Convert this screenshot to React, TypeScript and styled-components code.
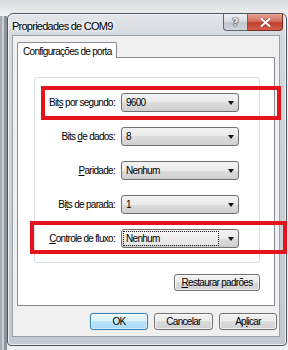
import React from 'react';
import styled, {createGlobalStyle, css} from 'styled-components';

const GlobalStyle = createGlobalStyle`
  html, body {
    margin: 0;
    padding: 0;
    background: #e6e7e9;
  }
  body {
    font-family: "Liberation Sans", Arial, sans-serif;
    font-size: 10px;
    letter-spacing: -0.7px;
    color: #000;
  }
`;

const Screen = styled.div`
  position: relative;
  width: 288px;
  height: 350px;
  box-sizing: border-box;
  padding: 13px 1px 0 7px;
  overflow: hidden;
  background:
    linear-gradient(90deg, #a7acb2 0 2px, #cdd1d5 2px 4px, #8d939a 4px 7px) 0 16px / 7px 100% no-repeat,
    linear-gradient(180deg, #d9dadc 0, #eceded 13px) 0 0 / 100% 13px no-repeat,
    #eeeff0;
`;

const Window = styled.div`
  width: 280px;
  height: 333px;
  box-sizing: border-box;
  border: 1px solid #4f555d;
  border-radius: 6px 6px 4px 4px;
  background: linear-gradient(180deg, #e3e6ea 0, #d3d8dd 24px, #c4c9cf 100%);
  box-shadow: inset 0 0 0 1px rgba(255, 255, 255, 0.65);
  display: flex;
  flex-direction: column;
  padding: 0 6px 8px 4px;
`;

const TitleBar = styled.div`
  height: 21px;
  display: flex;
  justify-content: space-between;
  align-items: flex-start;
  margin-right: -3px;
`;

const Title = styled.div`
  padding-top: 6px;
  font-size: 11px;
  letter-spacing: -0.75px;
  line-height: 12px;
  text-shadow: 0 0 4px #fff, 0 0 6px #fff;
`;

const Caption = styled.div`
  display: flex;
`;

const CaptionButton = styled.div<{$close?: boolean}>`
  height: 17px;
  box-sizing: border-box;
  display: flex;
  align-items: center;
  justify-content: center;
  border: 1px solid #5f6770;
  border-top: none;
  font-family: "DejaVu Sans", sans-serif;
  font-weight: bold;
  letter-spacing: 0;
  ${(p) =>
    p.$close
      ? css`
          width: 35px;
          border-radius: 0 0 4px 0;
          border-left: none;
          border-color: #7a2b22;
          background: linear-gradient(180deg, #e7a597 0, #d2705f 45%, #c0402c 55%, #d0604a 100%);
        `
      : css`
          width: 25px;
          border-radius: 0 0 0 4px;
          background: linear-gradient(180deg, #eef0f3 0, #d9dde2 45%, #c3c8cf 55%, #d2d6db 100%);
          color: #f4f4f4;
          font-size: 11px;
          text-shadow: 0 0 1px #222, 0 0 1px #222, 0 0 2px #444;
        `}
`;

const Client = styled.div`
  height: 302px;
  box-sizing: border-box;
  background: #f0f0f0;
  border: 1px solid #9aa0a7;
  padding: 6px 4px 0 4px;
  display: flex;
  flex-direction: column;
`;

const TabStrip = styled.div`
  display: flex;
  position: relative;
  z-index: 1;
  margin-bottom: -1px;
`;

const Tab = styled.div`
  width: 100px;
  height: 16px;
  box-sizing: border-box;
  background: #fff;
  border: 1px solid #898c95;
  border-bottom: none;
  border-radius: 2px 2px 0 0;
  padding: 3px 0 0 5px;
  line-height: 12px;
`;

const Panel = styled.div`
  height: 249px;
  box-sizing: border-box;
  background: #fff;
  border: 1px solid #898c95;
  padding: 19px 14px 0 16px;
  display: flex;
  flex-direction: column;
  align-items: flex-end;
`;

const GroupBox = styled.div`
  width: 226px;
  height: 186px;
  box-sizing: border-box;
  border: 1px solid #d5dfe5;
  border-radius: 3px;
  display: grid;
  grid-template-columns: 80px 118px;
  grid-auto-rows: 19px;
  column-gap: 6px;
  row-gap: 15px;
  padding-top: 15px;
  align-items: center;
  align-self: stretch;
`;

const Label = styled.div`
  text-align: right;
  white-space: nowrap;
`;

const Key = styled.span`
  text-decoration: underline;
`;

const Combo = styled.div`
  height: 19px;
  box-sizing: border-box;
  border: 1px solid #707070;
  border-radius: 3px;
  background: linear-gradient(180deg, #f2f2f2 0, #ebebeb 50%, #dddddd 50%, #cfcfcf 100%);
  display: flex;
  align-items: center;
  padding: 0 4px 0 2px;
`;

const ComboValue = styled.div<{$focused?: boolean}>`
  flex: 1;
  height: 13px;
  line-height: 13px;
  padding-left: 2px;
  box-sizing: border-box;
  margin-right: 10px;
  ${(p) =>
    p.$focused &&
    css`
      outline: 1px dotted #222;
      background: linear-gradient(180deg, #f6f6f6, #e4e4e4);
    `}
`;

const Arrow = styled.span`
  width: 0;
  height: 0;
  border-left: 3.5px solid transparent;
  border-right: 3.5px solid transparent;
  border-top: 4px solid #111;
`;

const Button = styled.div<{$width: number; $default?: boolean}>`
  width: ${(p) => p.$width}px;
  height: 17px;
  box-sizing: border-box;
  border: 1px solid #707070;
  border-radius: 3px;
  background: linear-gradient(180deg, #f2f2f2 0, #ebebeb 50%, #dddddd 50%, #cfcfcf 100%);
  box-shadow: inset 0 0 0 1px rgba(255, 255, 255, 0.7);
  display: flex;
  align-items: center;
  justify-content: center;
  line-height: 12px;
  ${(p) =>
    p.$default &&
    css`
      border-color: #3c7fb1;
      background: linear-gradient(180deg, #eaf6fd 0, #d9f0fc 50%, #bee6fd 50%, #a7d9f5 100%);
      box-shadow: inset 0 0 0 1px rgba(255, 255, 255, 0.5), 0 0 1px #6cc0ef;
    `}
`;

const RestoreRow = styled.div`
  margin-top: 11px;
`;

const ButtonRow = styled.div`
  margin-top: 7px;
  margin-right: -2px;
  display: flex;
  justify-content: flex-end;
  gap: 6px;
`;

const Highlight = styled.div<{$x: number; $y: number; $w: number; $h: number}>`
  position: absolute;
  left: ${(p) => p.$x}px;
  top: ${(p) => p.$y}px;
  width: ${(p) => p.$w}px;
  height: ${(p) => p.$h}px;
  box-sizing: border-box;
  border: 4px solid #e5131b;
  pointer-events: none;
`;

const CloseIcon = () => (
  <svg width="11" height="9" viewBox="0 0 11 9">
    <path d="M1.5 1 L9.5 8 M9.5 1 L1.5 8" stroke="#5b1208" strokeWidth="3.4" strokeLinecap="round" opacity="0.45" />
    <path d="M1.5 1 L9.5 8 M9.5 1 L1.5 8" stroke="#fff" strokeWidth="2.2" strokeLinecap="round" />
  </svg>
);

const rows: {label: React.ReactNode; value: string; focused?: boolean}[] = [
  {label: <>Bit<Key>s</Key> por segundo:</>, value: '9600'},
  {label: <>Bits <Key>d</Key>e dados:</>, value: '8'},
  {label: <><Key>P</Key>aridade:</>, value: 'Nenhum'},
  {label: <>Bi<Key>t</Key>s de parada:</>, value: '1'},
  {label: <><Key>C</Key>ontrole de fluxo:</>, value: 'Nenhum', focused: true},
];

export default function App() {
  return (
    <>
      <GlobalStyle />
      <Screen>
        <Window>
          <TitleBar>
            <Title>Propriedades de COM9</Title>
            <Caption>
              <CaptionButton>?</CaptionButton>
              <CaptionButton $close>
                <CloseIcon />
              </CaptionButton>
            </Caption>
          </TitleBar>
          <Client>
            <TabStrip>
              <Tab>Configurações de porta</Tab>
            </TabStrip>
            <Panel>
              <GroupBox>
                {rows.map((row, i) => (
                  <React.Fragment key={i}>
                    <Label>{row.label}</Label>
                    <Combo>
                      <ComboValue $focused={row.focused}>{row.value}</ComboValue>
                      <Arrow />
                    </Combo>
                  </React.Fragment>
                ))}
              </GroupBox>
              <RestoreRow>
                <Button $width={86}>
                  <span>
                    <Key>R</Key>estaurar padrões
                  </span>
                </Button>
              </RestoreRow>
            </Panel>
            <ButtonRow>
              <Button $width={58} $default>
                OK
              </Button>
              <Button $width={59}>Cancelar</Button>
              <Button $width={58}>
                <span>
                  Ap<Key>l</Key>icar
                </span>
              </Button>
            </ButtonRow>
          </Client>
        </Window>
        <Highlight $x={41} $y={86} $w={240} $h={34} />
        <Highlight $x={30} $y={221} $w={257} $h={33} />
      </Screen>
    </>
  );
}
